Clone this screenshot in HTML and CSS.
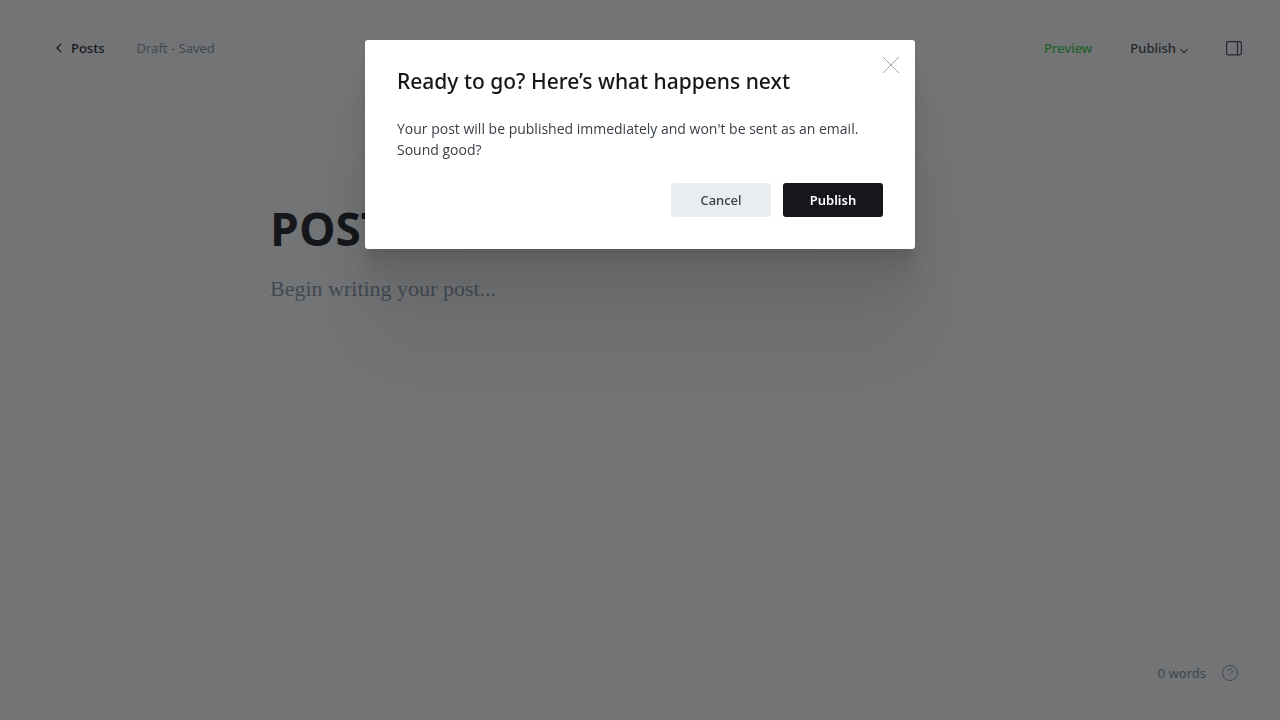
FILE: index.html
```html
<!DOCTYPE html>
<html lang="en">
<head>
<meta charset="utf-8">
<meta name="viewport" content="width=device-width, initial-scale=1">
<title>Post editor</title>
<link rel="stylesheet" href="styles.css">
</head>
<body>
<div class="editor">
  <header class="toolbar">
    <a class="back" href="#">
      <svg class="back-icon" viewBox="0 0 6 10" aria-hidden="true"><path d="M5 1 1 5l4 4"/></svg>
      <span>Posts</span>
    </a>
    <span class="status">Draft - Saved</span>
    <div class="actions">
      <button class="preview" type="button">Preview</button>
      <button class="publish-menu" type="button">
        <span>Publish</span>
        <svg class="chevron" viewBox="0 0 9 6" aria-hidden="true"><path d="M.5 1 4.500 5l4-4"/></svg>
      </button>
      <button class="settings" type="button" aria-label="Settings">
        <svg class="panel-icon" viewBox="0 0 16 15" aria-hidden="true"><rect x=".6" y=".6" width="14.800" height="13.300" rx="1.500"/><path d="M11.500.6v13.300"/></svg>
      </button>
    </div>
  </header>
  <main class="canvas">
    <h1 class="post-title">POST</h1>
    <p class="post-body">Begin writing your post...</p>
  </main>
  <footer class="footer">
    <span>0 words</span>
    <a class="help" href="#" aria-label="Help">
      <svg class="help-icon" viewBox="0 0 16 16" aria-hidden="true"><circle cx="8" cy="8" r="7.500"/><path d="M5.700 6.300a2.300 2.300 0 1 1 3.500 2c-.8.500-1.200.8-1.200 1.700M8 11.500v1"/></svg>
    </a>
  </footer>
</div>
<div class="overlay">
  <section class="modal" role="dialog" aria-modal="true" aria-labelledby="modal-title">
    <button class="close" type="button" aria-label="Close">
      <svg class="close-icon" viewBox="0 0 16 16" aria-hidden="true"><path d="m0 0 16 16M16 0 0 16"/></svg>
    </button>
    <h2 class="modal-title" id="modal-title">Ready to go? Here’s what happens next</h2>
    <p class="modal-text">Your post will be published immediately and won't be sent as an email. Sound good?</p>
    <div class="modal-actions">
      <button class="btn btn-cancel" type="button">Cancel</button>
      <button class="btn btn-publish" type="button">Publish</button>
    </div>
  </section>
</div>
</body>
</html>
```
FILE: styles.css
```css
* {
  box-sizing: border-box;
}

body {
  margin: 0;
  background: #fff;
  color: #15171a;
  font-family: "Segoe UI", "Noto Sans", "Open Sans", sans-serif;
  font-size: 13px;
  line-height: 20px;
}

h1, h2, p {
  margin: 0;
}

button {
  padding: 0;
  border: 0;
  background: none;
  color: inherit;
  font: inherit;
}

a {
  color: inherit;
  text-decoration: none;
}

svg {
  display: block;
  overflow: visible;
  fill: none;
  stroke: currentColor;
}

.editor {
  display: flex;
  flex-direction: column;
  min-height: 100vh;
}

.toolbar {
  display: flex;
  align-items: center;
  gap: 32px;
  padding: 38px 38px 0 56px;
}

.back {
  display: flex;
  align-items: center;
  gap: 9px;
  font-weight: 500;
}

.back-icon {
  width: 6px;
  height: 10px;
  stroke-width: 1.200;
}

.status {
  color: #8796a5;
}

.actions {
  display: flex;
  align-items: center;
  gap: 38px;
  margin-left: auto;
  font-weight: 500;
}

.preview {
  color: #30cf43;
}

.publish-menu {
  display: flex;
  align-items: center;
  gap: 4px;
  color: #394047;
}

.chevron {
  width: 8px;
  height: 6px;
  margin-top: 5px;
  stroke-width: 1.200;
}

.panel-icon {
  width: 16px;
  height: 15px;
  stroke: #394047;
  stroke-width: 1.200;
}

.canvas {
  flex: 1;
  width: 100%;
  max-width: 740px;
  margin: 0 auto;
  padding: 140px 0 0;
}

.post-title {
  font-family: "Segoe UI", "Open Sans", sans-serif;
  font-size: 46px;
  line-height: 60px;
  font-weight: 700;
}

.post-body {
  margin-top: 15px;
  color: #8796a5;
  font-family: Georgia, "Liberation Serif", serif;
  font-size: 22px;
  line-height: 32px;
}

.footer {
  display: flex;
  align-items: center;
  justify-content: flex-end;
  gap: 16px;
  padding: 0 42px 37px;
  color: #7c8b9a;
}

.help-icon {
  width: 16px;
  height: 16px;
}

.overlay {
  position: fixed;
  inset: 0;
  padding: 40px 16px;
  overflow: hidden;
  background: rgba(21, 23, 26, 0.6);
}

.modal {
  position: relative;
  max-width: 550px;
  margin: 0 auto;
  padding: 24px 32px 32px;
  border-radius: 3px;
  background: #fff;
  box-shadow:
    0 3px 2px rgba(0, 0, 0, 0.02),
    0 7px 5px rgba(0, 0, 0, 0.028),
    0 12px 10px rgba(0, 0, 0, 0.035),
    0 22px 18px rgba(0, 0, 0, 0.042),
    0 42px 33px rgba(0, 0, 0, 0.05),
    0 100px 80px rgba(0, 0, 0, 0.07);
}

.close {
  position: absolute;
  top: 17px;
  right: 16px;
  color: #a5a8ab;
}

.close-icon {
  width: 16px;
  height: 16px;
}

.modal-title {
  font-size: 21px;
  line-height: 34px;
  font-weight: 500;
}

.modal-text {
  margin-top: 20px;
  color: #394047;
  font-family: "Segoe UI", "Open Sans", sans-serif;
  font-size: 14px;
  line-height: 21px;
}

.modal-actions {
  display: flex;
  justify-content: flex-end;
  gap: 12px;
  margin-top: 23px;
}

.btn {
  width: 100px;
  height: 34px;
  border-radius: 3px;
  font-weight: 600;
}

.btn-cancel {
  background: #e9edf1;
  color: #394047;
  font-weight: 500;
}

.btn-publish {
  background: #15171a;
  color: #fff;
}
```
